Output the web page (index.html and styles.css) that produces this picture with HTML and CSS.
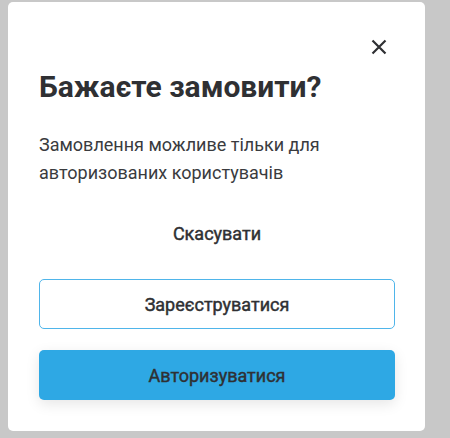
FILE: index.html
```html
<!DOCTYPE html>
<html lang="uk">

<head>
  <meta charset="UTF-8" />
  <title>Бажаєте замовити?</title>
  <link rel="stylesheet" href="styles.css">
</head>

<body>
  <div class="modal">
    <div class="modal-top">
      <button class="close" aria-label="Закрити">
        <svg width="24" height="24" viewBox="0 0 24 24">
          <path d="M5.5 5.5 L18.5 18.5 M18.5 5.5 L5.5 18.5" stroke="#2f3033" stroke-width="2.2" fill="none" />
        </svg>
      </button>
    </div>
    <h1 class="title">Бажаєте замовити?</h1>
    <p class="text">Замовлення можливе тільки для авторизованих користувачів</p>
    <button class="btn btn-cancel">Скасувати</button>
    <button class="btn btn-outline">Зареєструватися</button>
    <button class="btn btn-primary">Авторизуватися</button>
  </div>
</body>

</html>
```

FILE: styles.css
```css
body {
  margin: 2px 0 0 8px;
  background-color: #c8c8c8;
  font-family: Roboto, "Liberation Sans", sans-serif;
  color: #2f3033;
}

.modal {
  box-sizing: border-box;
  width: 417px;
  background-color: #fff;
  border-radius: 5px;
  padding: 33px 30px 31px 31px;
  display: flex;
  flex-direction: column;
}

.modal-top {
  display: flex;
  justify-content: flex-end;
  padding-right: 4px;
}

.close {
  width: 24px;
  height: 24px;
  padding: 0;
  border: none;
  background: none;
  cursor: pointer;
}

.close svg {
  display: block;
}

.title {
  margin: 10px 0 0;
  font-size: 30px;
  line-height: 36px;
  font-weight: 700;
}

.text {
  margin: 26px 0 0;
  font-size: 18px;
  line-height: 28px;
  color: #3a3b3e;
}

/* medium weight: regular face thickened a little */
.btn {
  box-sizing: border-box;
  width: 100%;
  font-family: inherit;
  font-size: 18px;
  font-weight: 400;
  -webkit-text-stroke: 0.45px #2f3033;
  color: #2f3033;
  border-radius: 5px;
  cursor: pointer;
}

.btn-cancel {
  height: 48px;
  margin-top: 22px;
  border: none;
  background: none;
}

.btn-outline {
  height: 50px;
  margin-top: 22px;
  border: 1px solid #4fb5ea;
  background-color: #fff;
}

.btn-primary {
  height: 50px;
  margin-top: 21px;
  border: none;
  background-color: #2ea8e4;
  box-shadow: 0 4px 14px rgba(0, 0, 0, 0.1);
}
```
